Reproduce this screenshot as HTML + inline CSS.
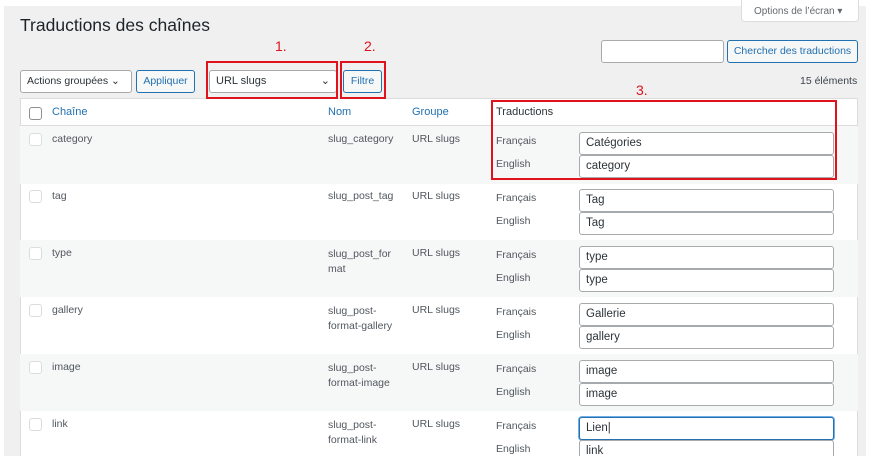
<!DOCTYPE html><html><head><meta charset="utf-8"><style>
*{box-sizing:border-box;margin:0;padding:0}
body{width:878px;height:463px;background:#fff;font-family:"Liberation Sans",sans-serif;position:relative;overflow:hidden;color:#3c434a}
.a{position:absolute}
#bg{left:4px;top:6px;width:862px;height:450px;background:#f0f0f1}
.t{font-size:10.5px;color:#50575e}
.lnk{color:#2271b1;font-size:11px}
.inp{position:absolute;background:#fff;border:1px solid #a7aaad;border-radius:3px;font-size:11.5px;color:#2c3338;padding:4px 6px;height:23px;line-height:13px}
.btn{position:absolute;border:1px solid #2271b1;border-radius:3px;background:#f6f7f7;color:#2271b1;font-size:10.5px;text-align:center}
.red{position:absolute;border:2px solid #e0121b}
.rn{position:absolute;color:#e0121b;font-size:14px}
.row{position:absolute;left:20px;width:838px}
.cb{position:absolute;left:9px;width:13px;height:13px;border:1px solid #dcdcde;border-radius:3px;background:#fff}
</style></head><body>
<div id="bg" class="a"></div>
<div class="a" style="left:20px;top:15px;font-size:17.5px;color:#1d2327">Traductions des chaînes</div>
<div class="a" style="left:741px;top:0;width:118px;height:22px;background:#fff;border:1px solid #dcdcde;border-top:none;border-radius:0 0 4px 4px;font-size:10px;color:#646970;padding:6px 0 0 12px">Options de l’écran ▾</div>
<div class="inp" style="left:601px;top:40px;width:123px"></div>
<div class="btn" style="left:727px;top:40px;width:131px;height:23px;line-height:21px">Chercher des traductions</div>
<div class="a t" style="left:800px;top:75px;color:#3c434a">15 éléments</div>
<div class="inp" style="left:20px;top:70px;width:112px;color:#2c3338;font-size:10.5px">Actions groupées ⌄</div>
<div class="btn" style="left:136px;top:70px;width:59px;height:23px;line-height:21px">Appliquer</div>
<div class="inp" style="left:209px;top:70px;width:128px;font-size:11px">URL slugs<span style="position:absolute;right:6px">⌄</span></div>
<div class="btn" style="left:343px;top:70px;width:39px;height:23px;line-height:21px">Filtre</div>
<div class="a" style="left:20px;top:98px;width:838px;height:358px;background:#fff;border:1px solid #dcdcde;border-bottom:none"></div>
<div class="row" style="top:98px;height:28px;border-bottom:1px solid #dcdcde">
<div class="cb" style="top:9px;border-color:#8c8f94"></div>
<div class="a lnk" style="left:32px;top:8px">Chaîne</div>
<div class="a lnk" style="left:308px;top:8px">Nom</div>
<div class="a lnk" style="left:392px;top:8px">Groupe</div>
<div class="a" style="left:476px;top:8px;font-size:11px;color:#2c3338">Traductions</div>
</div>
<div class="row" style="top:126px;height:58px;background:#f6f7f7"></div>
<div class="row" style="top:240px;height:57px;background:#f6f7f7"></div>
<div class="row" style="top:354px;height:57px;background:#f6f7f7"></div>

<div class="cb a" style="left:29px;top:133px"></div><div class="a t" style="left:52px;top:133px">category</div><div class="a t" style="left:328px;top:133px">slug_category</div><div class="a t" style="left:412px;top:133px">URL slugs</div>
<div class="a t" style="left:496px;top:135px">Français</div><div class="a t" style="left:496px;top:158px">English</div>
<div class="inp" style="left:579px;top:132px;width:255px">Catégories</div><div class="inp" style="left:579px;top:155px;width:255px">category</div>

<div class="cb a" style="left:29px;top:190px"></div><div class="a t" style="left:52px;top:190px">tag</div><div class="a t" style="left:328px;top:190px">slug_post_tag</div><div class="a t" style="left:412px;top:190px">URL slugs</div>
<div class="a t" style="left:496px;top:192px">Français</div><div class="a t" style="left:496px;top:215px">English</div>
<div class="inp" style="left:579px;top:189px;width:255px">Tag</div><div class="inp" style="left:579px;top:212px;width:255px">Tag</div>

<div class="cb a" style="left:29px;top:247px"></div><div class="a t" style="left:52px;top:247px">type</div><div class="a t" style="left:328px;top:247px;line-height:15px">slug_post_for<br>mat</div><div class="a t" style="left:412px;top:247px">URL slugs</div>
<div class="a t" style="left:496px;top:249px">Français</div><div class="a t" style="left:496px;top:272px">English</div>
<div class="inp" style="left:579px;top:246px;width:255px">type</div><div class="inp" style="left:579px;top:269px;width:255px">type</div>

<div class="cb a" style="left:29px;top:304px"></div><div class="a t" style="left:52px;top:304px">gallery</div><div class="a t" style="left:328px;top:304px;line-height:15px">slug_post-<br>format-gallery</div><div class="a t" style="left:412px;top:304px">URL slugs</div>
<div class="a t" style="left:496px;top:306px">Français</div><div class="a t" style="left:496px;top:329px">English</div>
<div class="inp" style="left:579px;top:303px;width:255px">Gallerie</div><div class="inp" style="left:579px;top:326px;width:255px">gallery</div>

<div class="cb a" style="left:29px;top:361px"></div><div class="a t" style="left:52px;top:361px">image</div><div class="a t" style="left:328px;top:361px;line-height:15px">slug_post-<br>format-image</div><div class="a t" style="left:412px;top:361px">URL slugs</div>
<div class="a t" style="left:496px;top:363px">Français</div><div class="a t" style="left:496px;top:386px">English</div>
<div class="inp" style="left:579px;top:360px;width:255px">image</div><div class="inp" style="left:579px;top:383px;width:255px">image</div>

<div class="cb a" style="left:29px;top:418px"></div><div class="a t" style="left:52px;top:418px">link</div><div class="a t" style="left:328px;top:418px;line-height:15px">slug_post-<br>format-link</div><div class="a t" style="left:412px;top:418px">URL slugs</div>
<div class="a t" style="left:496px;top:420px">Français</div><div class="a t" style="left:496px;top:443px">English</div>
<div class="inp" style="left:579px;top:417px;width:255px;border-color:#2271b1;box-shadow:0 0 0 1px #72aee6">Lien|</div><div class="inp" style="left:579px;top:440px;width:255px">link</div>
<div class="a" style="left:0;top:456px;width:878px;height:7px;background:#fff"></div>

<div class="red" style="left:206px;top:61px;width:132px;height:38px"></div>
<div class="red" style="left:340px;top:61px;width:46px;height:38px"></div>
<div class="red" style="left:491px;top:100px;width:346px;height:80px"></div>
<div class="rn" style="left:275px;top:38px">1.</div>
<div class="rn" style="left:364px;top:38px">2.</div>
<div class="rn" style="left:636px;top:82px">3.</div>
</body></html>
